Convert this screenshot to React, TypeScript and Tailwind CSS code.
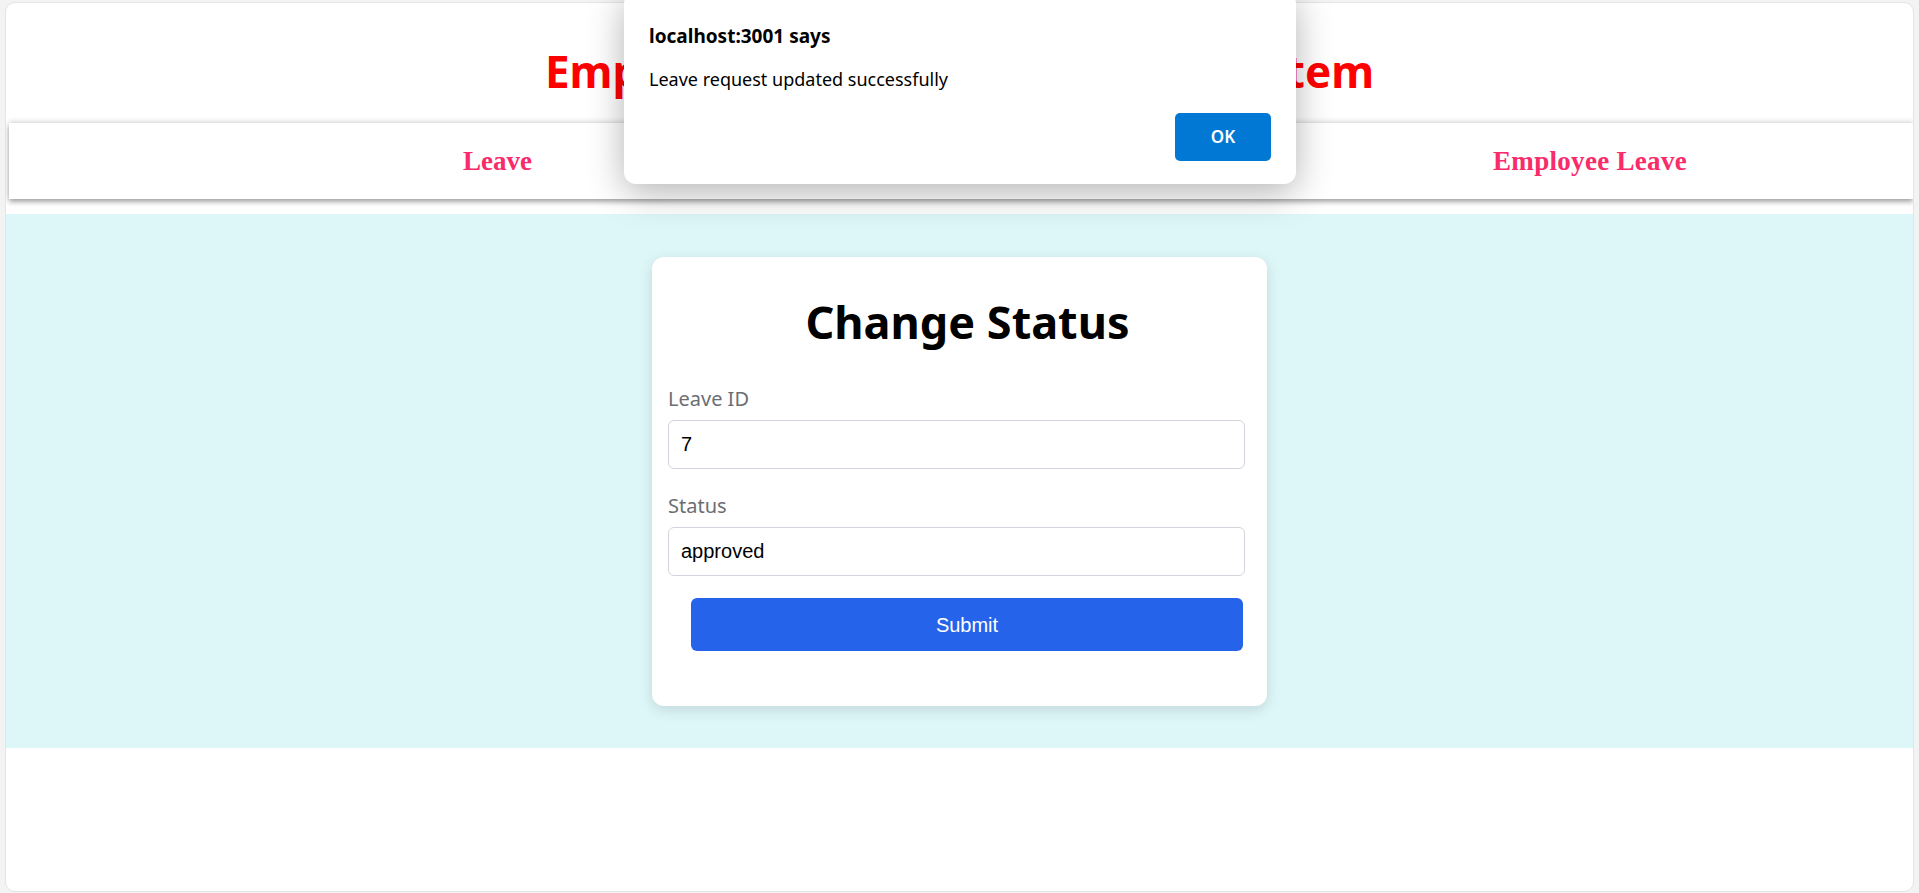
import React from 'react'

const sans = { fontFamily: '"Noto Sans", "Open Sans", sans-serif' }

function AlertBox() {
  return (
    <div
      className="absolute -top-2 left-[624px] w-[672px] rounded-[12px] bg-white px-[25px] pt-[32px] pb-[23px] shadow-[0_8px_36px_rgba(0,0,0,0.3)]"
      style={sans}
    >
      <p className="text-[19px] leading-[24px] font-bold text-black">localhost:3001 says</p>
      <p className="mt-[19px] text-[18px] leading-[24px] text-black">Leave request updated successfully</p>
      <div className="mt-[22px] flex justify-end">
        <button className="h-[48px] w-[96px] rounded-[5px] bg-[#0078d4] text-[17px] font-semibold text-white">
          OK
        </button>
      </div>
    </div>
  )
}

function Field(props: { label: string; value: string; top: string }) {
  return (
    <div className={props.top}>
      <label className="block text-[20px] leading-[28px] text-[#6b6e73]" style={sans}>
        {props.label}
      </label>
      <input
        readOnly
        value={props.value}
        className="mt-[7px] h-[49px] w-[577px] rounded-[6px] border border-[#d1d5db] bg-white px-3 text-[20px] text-black outline-none font-['Liberation_Sans',Arial,sans-serif]"
      />
    </div>
  )
}

function ChangeStatus() {
  return (
    <div className="w-[615px] rounded-[12px] bg-white pl-4 pt-[37px] pb-[55px] shadow-[0_4px_14px_rgba(0,0,0,0.12)]">
      <h2
        className="text-center text-[45px] leading-[56px] font-bold text-black"
        style={sans}
      >
        Change Status
      </h2>
      <Field label="Leave ID" value="7" top="mt-[35px]" />
      <Field label="Status" value="approved" top="mt-[23px]" />
      <div className="mt-[22px] pr-[24px] pl-[23px]">
        <button className="h-[53px] w-full rounded-[6px] bg-[#2563eb] text-[20px] text-white font-['Liberation_Sans',Arial,sans-serif]">
          Submit
        </button>
      </div>
    </div>
  )
}

export default function App() {
  return (
    <div className="relative h-[893px] w-full overflow-hidden bg-[#f3f3f3] px-[5px] pt-[2px]">
      <div className="h-[890px] overflow-hidden rounded-[10px] border border-[#e4e4e4] bg-white">
        <header className="flex h-[120px] items-center justify-center pt-4">
          <h1 className="text-[44px] font-bold text-[#ff0000]" style={sans}>
            Employee Leave Management System
          </h1>
        </header>

        <nav className="ml-[3px] flex h-[76px] items-center justify-between bg-white pl-[454px] pr-[226px] text-[27px] font-bold text-[#f82b6b] shadow-[0_-2px_5px_rgba(0,0,0,0.12),0_3px_5px_rgba(0,0,0,0.35)] font-['Liberation_Serif',serif]">
          <span>Leave</span>
          <span>Change Status</span>
          <span className="tracking-[0.3px]">Employee Leave</span>
        </nav>

        <main className="mt-[15px] flex justify-center bg-[#ddf6f8] pt-[43px] pb-[42px]">
          <ChangeStatus />
        </main>
      </div>

      <AlertBox />
    </div>
  )
}
